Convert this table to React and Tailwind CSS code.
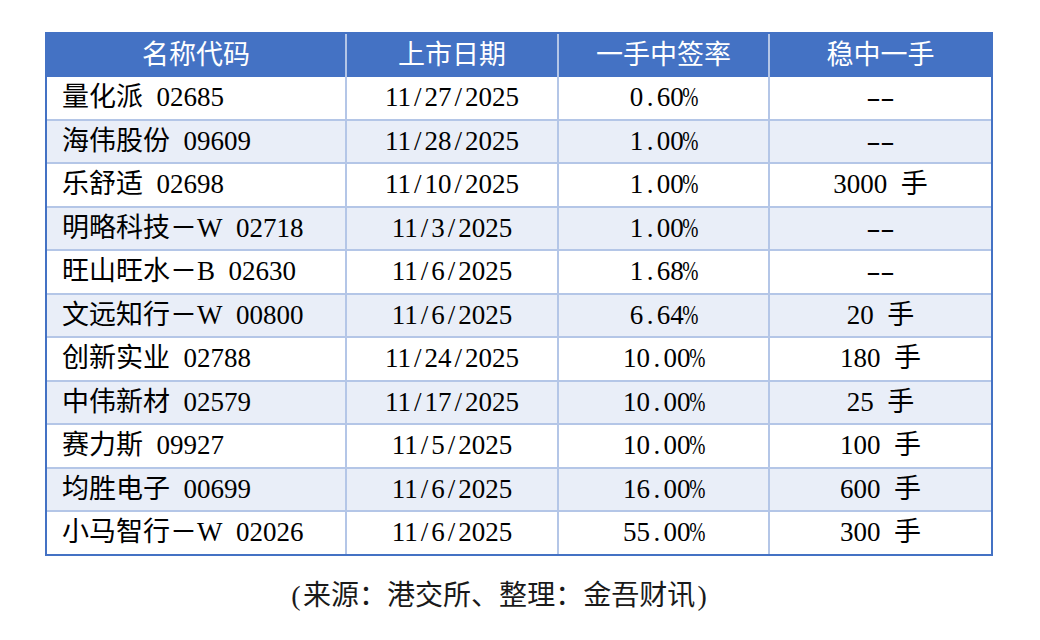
import React from "react";

const FONT = { fontFamily: '"Liberation Serif", "Noto Sans CJK SC", serif' };

function T({ s }) {
  return [...s].map((c, i) => {
    if (c === "%") {
      return (
        <span key={i} className="inline-flex w-[0.5em] justify-center">
          <span className="inline-block scale-x-[0.72]">%</span>
        </span>
      );
    }
    if (c === "-") {
      return (
        <span key={i} className="inline-flex w-[0.5em] justify-center">
          <span className="inline-block scale-x-[1.6]">-</span>
        </span>
      );
    }
    if (/[\/.() ]/.test(c)) {
      return (
        <span key={i} className="inline-flex w-[0.5em] justify-center">
          {c === " " ? "\u00a0" : c}
        </span>
      );
    }
    return <React.Fragment key={i}>{c}</React.Fragment>;
  });
}

const rows = [
  ["量化派 02685", "11/27/2025", "0.60%", "--"],
  ["海伟股份 09609", "11/28/2025", "1.00%", "--"],
  ["乐舒适 02698", "11/10/2025", "1.00%", "3000 手"],
  ["明略科技－W 02718", "11/3/2025", "1.00%", "--"],
  ["旺山旺水－B 02630", "11/6/2025", "1.68%", "--"],
  ["文远知行－W 00800", "11/6/2025", "6.64%", "20 手"],
  ["创新实业 02788", "11/24/2025", "10.00%", "180 手"],
  ["中伟新材 02579", "11/17/2025", "10.00%", "25 手"],
  ["赛力斯 09927", "11/5/2025", "10.00%", "100 手"],
  ["均胜电子 00699", "11/6/2025", "16.00%", "600 手"],
  ["小马智行－W 02026", "11/6/2025", "55.00%", "300 手"],
];

const headers = ["名称代码", "上市日期", "一手中签率", "稳中一手"];

export default function App() {
  return (
    <div className="w-[1040px] h-[640px] bg-white pt-[32px]" style={FONT}>
      <div className="ml-[45px] w-[948px] border-2 border-[#4472c4]">
        <div className="grid grid-cols-[298px_210px_209px_221px] gap-x-[2px] bg-[#b4c6e7]">
          {headers.map((h, i) => (
            <div
              key={i}
              className="h-[43px] bg-[#4472c4] flex items-center justify-center text-white text-[27px] leading-none"
            >
              {h}
            </div>
          ))}
        </div>
        <div className="flex flex-col gap-y-[2px] bg-[#b4c6e7]">
          {rows.map((r, ri) => {
            const bg = ri % 2 === 0 ? "bg-white" : "bg-[#e9eef8]";
            return (
              <div
                key={ri}
                className="grid grid-cols-[298px_210px_209px_221px] gap-x-[2px] h-[41.5px]"
              >
                {r.map((c, ci) => (
                  <div
                    key={ci}
                    className={`${bg} flex items-center text-black text-[27px] leading-none whitespace-nowrap ${
                      ci === 0 ? "justify-start pl-[15px]" : "justify-center"
                    }`}
                  >
                    <T s={c} />
                  </div>
                ))}
              </div>
            );
          })}
        </div>
      </div>
      <div className="mt-[22px] pl-[289px] text-[28px] leading-[36px] text-[#1a1a1a] whitespace-nowrap">
        <T s="(来源：港交所、整理：金吾财讯)" />
      </div>
    </div>
  );
}
